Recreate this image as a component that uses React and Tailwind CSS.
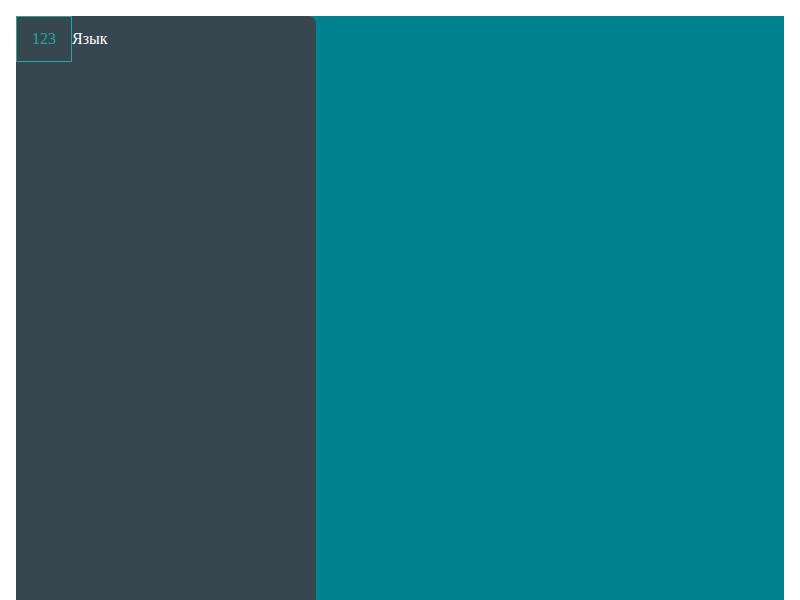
export default function App() {
  return (
    <div className="px-4 pt-4 bg-white" style={{ fontFamily: '"Liberation Serif", serif' }}>
      <div className="h-[584px] bg-[#00838f] flex">
        <div className="w-[300px] h-full bg-[#37474f] rounded-tr-lg">
          <div className="flex items-center">
            <div className="w-[56px] h-[46px] border border-[#26a69a] text-[#26a69a] flex items-center justify-center text-base">
              123
            </div>
            <span className="text-white text-base">Язык</span>
          </div>
        </div>
      </div>
    </div>
  );
}
